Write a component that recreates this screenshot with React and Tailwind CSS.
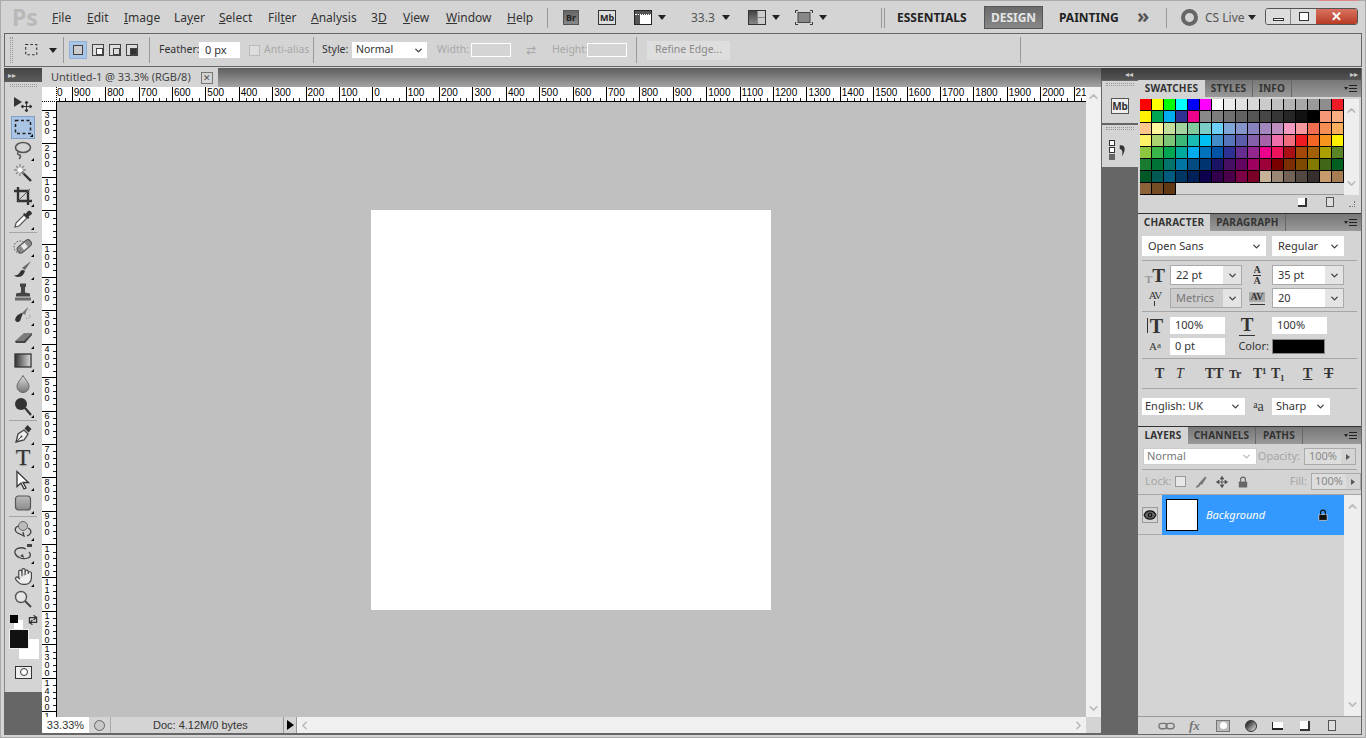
import React from "react";
import { ChevronDown, ChevronUp, ChevronLeft, ChevronRight, Hand, Eye } from "lucide-react";

const menus = [
  ["", "F", "ile", "w-[35px]"], ["", "E", "dit", "w-[37px]"], ["", "I", "mage", "w-[50px]"], ["La", "y", "er", "w-[45px]"],
  ["", "S", "elect", "w-[49px]"], ["Fil", "t", "er", "w-[43px]"], ["", "A", "nalysis", "w-[60px]"], ["3", "D", "", "w-[32px]"],
  ["", "V", "iew", "w-[43px]"], ["", "W", "indow", "w-[61px]"], ["", "H", "elp", "w-[40px]"],
];

const swatches = [
  ["#ff0000","#ffff00","#00ff00","#00ffff","#0000ff","#ff00ff","#ffffff","#ebebeb","#e1e1e1","#d7d7d7","#cbcbcb","#c0c0c0","#b4b4b4","#a8a8a8","#9a9a9a","#8d8d8d","#ed1c24"],
  ["#fff200","#00a651","#00aeef","#2e3192","#ec008c","#898989","#7d7d7d","#707070","#626262","#555555","#464646","#363636","#262626","#111111","#000000","#f7977a","#f9ad81"],
  ["#fdc68a","#fff79a","#c4df9b","#a2d39c","#82ca9d","#7bcdc8","#6ecff6","#7ea7d8","#8493ca","#8882be","#a187be","#bc8dbf","#f49ac2","#f6989d","#f26c4f","#f68e55","#fbaf5c"],
  ["#fff467","#acd372","#7cc576","#3bb878","#1abbb4","#00bff3","#438cca","#5574b9","#5c5caa","#855fa8","#a763a8","#ee6fa9","#f16d7e","#ed1c24","#f26522","#f7941d","#fff200"],
  ["#8dc63f","#39b54a","#00a651","#00a99d","#00aeef","#0072bc","#0054a6","#2e3192","#662d91","#92278f","#ec008c","#ed145b","#aa1116","#a4490a","#a36209","#aba000","#598527"],
  ["#197b30","#007236","#00746b","#0076a3","#004b80","#003471","#1b1464","#440e62","#630460","#9e005d","#9e0039","#790000","#7b2e00","#7d4900","#827b00","#406618","#005e20"],
  ["#005826","#005952","#005b7f","#003663","#002157","#0d004c","#32004b","#4b0049","#7b0046","#7a0026","#c7b299","#998675","#736357","#534741","#362f2d","#c69c6d","#a67c52"],
  ["#8c6239","#754c24","#603813"],
].flat();

const hLabels = [1000,900,800,700,600,500,400,300,200,100,0,100,200,300,400,500,600,700,800,900,1000,1100,1200,1300,1400,1500,1600,1700,1800,1900,2000,2100];
// last one is cut by the status bar, only its first digit shows
const vLabels = [300,200,100,0,100,200,300,400,500,600,700,800,900,1000,1100,1200,1300,1400,1];

const Svg = ({ size = 20, children }) => (
  <svg width={size} height={size} viewBox="0 0 20 20" fill="none">{children}</svg>
);

const icons = {
  move: <Svg><path d="M1 3l8 5-8 5z" fill="#333"/><path d="M13.500 8v9M9 12.500h9M13.500 7l-1.500 2h3zM13.500 18l-1.500-2h3zM8 12.500l2-1.500v3zM19 12.500l-2-1.500v3z" stroke="#333" fill="#333" strokeWidth="1"/></Svg>,
  marquee: <Svg><rect x="2.500" y="3.500" width="15" height="13" stroke="#222" strokeWidth="1.500" strokeDasharray="3 2.500"/></Svg>,
  lasso: <Svg><ellipse cx="10" cy="7.500" rx="7.500" ry="5" stroke="#555" strokeWidth="1.600"/><path d="M5 12c-1 2 0 3 2 3 1 1 0 3-1 4" stroke="#555" strokeWidth="1.400"/></Svg>,
  wand: <Svg><path d="M9 9l9 9" stroke="#333" strokeWidth="2.400"/><path d="M7 1v3M7 10v3M1 7h3M10 7h3M3 3l2 2M9 9l2 2M11 3L9 5M3 11l2-2" stroke="#8a8a8a" strokeWidth="1.300"/><circle cx="7" cy="7" r="2" fill="#fff"/></Svg>,
  crop: <Svg><path d="M5 1v14h14M1 5h14v14" stroke="#333" strokeWidth="2.400"/><path d="M5 15L17 3" stroke="#555" strokeWidth="1"/></Svg>,
  dropper: <Svg><path d="M2 18l1-4 8-8 3 3-8 8z" fill="#fff" stroke="#555" strokeWidth="1.200"/><path d="M10 5l5 5 1.500-1.500-1-1L19 5c0-2-2-4-4-3l-2.500 3-1-1z" fill="#333"/></Svg>,
  heal: <Svg><circle cx="7" cy="11" r="6" stroke="#444" strokeWidth="1" strokeDasharray="1.500 1.500"/><rect x="3" y="7" width="16" height="7" rx="3" transform="rotate(-40 11 10)" fill="#8a8a8a" stroke="#555"/><rect x="8.500" y="8" width="5" height="5" transform="rotate(-40 11 10)" fill="#e8e8e8"/></Svg>,
  brush: <Svg><path d="M9 9l9-7-6 9z" fill="#666"/><path d="M1 16c3 1 5-1 6-3 1-2 3-3 5-1-1 3-3 6-7 6-2 0-3-1-4-2z" fill="#333"/></Svg>,
  stamp: <Svg><path d="M7 1.500h6v3l-1 1v5l5 1v3H3v-3l5-1v-5l-1-1z" fill="#444"/><rect x="2" y="15.500" width="16" height="3" fill="#6b6b6b"/></Svg>,
  history: <Svg><path d="M2 15c1-5 5-7 8-7l-3 8c-2 2-4 1-5-1z" fill="#333"/><path d="M9 8l6-6-3 8z" fill="#777"/><path d="M13 13a2.500 2.500 0 1 0 3-4M14 3l3 3" stroke="#888" strokeDasharray="1.200 1.200"/></Svg>,
  eraser: <Svg><path d="M2 13L11 5h8l-7 10H3z" fill="#7c7c7c"/><path d="M2 13h9l8-8v2l-7 8H3z" fill="#444"/></Svg>,
  gradient: <Svg><defs><linearGradient id="gr" x1="0" x2="1"><stop offset="0" stopColor="#333"/><stop offset="1" stopColor="#ddd"/></linearGradient></defs><rect x="2" y="3" width="16" height="13" fill="url(#gr)" stroke="#333" strokeWidth="1.300"/></Svg>,
  drop: <Svg><defs><linearGradient id="dr" x1="0" y1="0" x2="0" y2="1"><stop offset="0" stopColor="#ddd"/><stop offset="1" stopColor="#777"/></linearGradient></defs><path d="M10 1.500c3 5 6 7.500 6 11a6 6 0 0 1-12 0c0-3.500 3-6 6-11z" fill="url(#dr)" stroke="#666"/></Svg>,
  burn: <Svg><circle cx="8" cy="7" r="6" fill="#333"/><path d="M12 11l6 7" stroke="#333" strokeWidth="2.200"/></Svg>,
  pen: <Svg><path d="M3 18l2-8 6-4 4 4-4 6z" fill="#eee" stroke="#444" strokeWidth="1.300"/><path d="M3 18l5-5" stroke="#444"/><circle cx="8.500" cy="12.500" r="1" fill="#444"/><path d="M11.500 4.500l3-3.500 4 4-3 3.500z" fill="#333"/></Svg>,
  select: <Svg><path d="M4 1.500v15l4-3.500 3 6 2-1-3-5.500h5.500z" fill="#fff" stroke="#333" strokeWidth="1.300"/></Svg>,
  shape: <Svg><defs><linearGradient id="sh" x1="0" y1="0" x2="0" y2="1"><stop offset="0" stopColor="#bbb"/><stop offset="1" stopColor="#8a8a8a"/></linearGradient></defs><rect x="2.500" y="3" width="15" height="14" rx="3" fill="url(#sh)" stroke="#555" strokeWidth="1.200"/></Svg>,
  rotate: <Svg><circle cx="10" cy="6" r="4.500" fill="#bbb" stroke="#666"/><path d="M5 6C1 8 1 12 7 14M15 8c4 2 4 6-1 8M7 14l4 2-1-4" stroke="#444" strokeWidth="1.300"/></Svg>,
  orbit: <Svg><path d="M13 6C7 3 1 6 2 10s7 7 13 5c3-1 3-4 1-6" stroke="#444" strokeWidth="1.300"/><path d="M7 13l4 2-1-4" fill="#444"/><rect x="14" y="1" width="5" height="3" fill="#444"/></Svg>,
  zoom: <Svg><circle cx="8" cy="8" r="5.500" fill="#e6e6e6" stroke="#555" strokeWidth="1.400"/><path d="M12 12l6 6" stroke="#444" strokeWidth="2"/></Svg>,
};

const toolGroups = [
  [["move", 0], ["marquee", 1, true], ["lasso", 1], ["wand", 0], ["crop", 1], ["dropper", 1]],
  [["heal", 1], ["brush", 1], ["stamp", 1], ["history", 1], ["eraser", 1], ["gradient", 1], ["drop", 1], ["burn", 1]],
  [["pen", 1], ["T", 1], ["select", 1], ["shape", 1]],
  [["rotate", 1], ["orbit", 1], ["hand", 1], ["zoom", 0]],
];

const Tool = ({ name, flyout, active }) => (
  <div className={`relative h-[23px] w-[24px] flex items-center justify-center ${active ? "bg-[#a9c4e4] border border-[#7f9fc6]" : ""}`}>
    {name === "T" ? (
      <span className="font-['Liberation_Serif',serif] text-[24px] leading-none text-[#333] [text-shadow:0_1px_1px_#999]">T</span>
    ) : name === "hand" ? (
      <Hand size={19} strokeWidth={1.5} color="#444" fill="#eee" />
    ) : (
      icons[name]
    )}
    {flyout ? <span className="absolute right-[1px] bottom-[1px] w-0 h-0 border-l-[3px] border-l-transparent border-b-[3px] border-b-black" /> : null}
  </div>
);

const Toolbox = () => (
  <div className="w-[38px] shrink-0 bg-[#666] flex flex-col">
    <div className="h-[14px] bg-gradient-to-b from-[#444] to-[#5c5c5c] text-[#ccc] text-[8px] leading-[13px] pl-[4px]">▸▸</div>
    <div className="h-[610px] bg-[#d4d4d4] border-l border-[#888] flex flex-col items-center pt-[2px] pr-[1px]">
      <div className="w-[27px] h-[3px] border-y border-dotted border-[#999]" />
      <div className="mt-[6px] flex flex-col items-center">
        {toolGroups.map((group, i) => (
          <div key={i} className={`flex flex-col items-center ${i ? "border-t border-[#a5a5a5] mt-[1px] pt-[2px] w-[28px]" : ""}`}>
            {group.map(([name, fly, active]) => <Tool key={name} name={name} flyout={fly} active={active} />)}
          </div>
        ))}
      </div>
      <div className="relative w-full h-[78px] mt-[4px]">
        <div className="absolute left-[9px] top-[5px] w-[9px] h-[9px] bg-white" />
        <div className="absolute left-[5px] top-[0px] w-[8px] h-[8px] bg-black" />
        <div className="absolute left-[22px] top-[-1px]">
          <Svg size={12}><path d="M4 16V6h10M11 2l4 4-4 4M16 4v10H6M9 18l-4-4 4-4" stroke="#333" strokeWidth="2" /></Svg>
        </div>
        <div className="absolute left-[14px] top-[24px] w-[20px] h-[20px] bg-white" />
        <div className="absolute left-[4px] top-[14px] w-[20px] h-[20px] bg-[#111] border border-[#eee]" />
        <div className="absolute left-[10px] top-[51px] w-[17px] h-[13px] bg-[#eee] border border-[#333] flex items-center justify-center">
          <div className="w-[8px] h-[8px] rounded-full border border-[#333] bg-white" />
        </div>
      </div>
    </div>
  </div>
);

const HRuler = () => (
  <div className="flex-1 h-[15px] bg-white border-b border-black flex overflow-hidden">
    {hLabels.map((label, i) => (
      <div key={i} className={`w-[33.4px] shrink-0 border-l border-black flex flex-col ${i === 0 ? "ml-[-18.6px]" : ""}`}>
        <span className="text-[10px] leading-[11px] pl-[1px] text-black font-['Liberation_Sans',sans-serif]">{label}</span>
        <div className="flex mt-auto h-[3px]">
          {[0, 1, 2, 3, 4].map((t) => <div key={t} className={`w-[6.6px] ${t ? "border-l border-[#222]" : ""}`} />)}
        </div>
      </div>
    ))}
  </div>
);

const VRuler = () => (
  <div className="w-[15px] h-[615px] bg-white border-r border-black flex flex-col overflow-hidden shrink-0">
    <div className="h-[8px] shrink-0" />
    {vLabels.map((label, i) => (
      <div key={i} className="h-[33.4px] shrink-0 border-t border-black flex">
        <div className="w-[10px] flex flex-col items-center text-[9px] leading-[8px] text-black font-['Liberation_Sans',sans-serif]">
          {String(label).split("").map((d, k) => <span key={k}>{d}</span>)}
        </div>
        <div className="flex-1 flex flex-col items-end">
          {[0, 1, 2, 3, 4].map((t) => <div key={t} className={`h-[6.6px] w-[3px] ${t ? "border-t border-[#222]" : ""}`} />)}
        </div>
      </div>
    ))}
  </div>
);

const DocArea = () => (
  <div className="flex-1 flex flex-col min-w-0">
    <div className="h-[19px] bg-gradient-to-b from-[#5e5e5e] to-[#a3a3a3] flex shrink-0">
      <div className="w-[176px] bg-[#d4d4d4] flex items-center pl-[9px] text-[11px] text-[#444] whitespace-nowrap">
        <span>Untitled-1 @ 33.3% (RGB/8)</span>
        <span className="ml-auto mr-[5px] w-[12px] h-[12px] border border-[#777] flex items-center justify-center text-[9px] leading-none text-[#555]">✕</span>
      </div>
    </div>
    <div className="flex flex-1 min-h-0">
      <div className="flex-1 flex flex-col min-w-0">
        <div className="flex h-[15px] shrink-0">
          <div className="w-[15px] h-[15px] bg-white border-b border-r border-dotted border-black shrink-0" />
          <HRuler />
        </div>
        <div className="flex flex-1 min-h-0">
          <VRuler />
          <div className="flex-1 bg-[#c0c0c0] flex items-center justify-center pr-[1px]">
            <div className="w-[400px] h-[400px] bg-white" />
          </div>
        </div>
      </div>
      <div className="w-[15px] bg-[#f0f0f0] flex flex-col items-center justify-between pt-[3px] pb-[2px] shrink-0">
        <ChevronUp size={13} color="#bbb" strokeWidth={3} />
        <ChevronDown size={13} color="#bbb" strokeWidth={3} />
      </div>
    </div>
    <div className="h-[17px] flex items-stretch bg-[#d4d4d4] border-b border-[#666] text-[11px] text-[#333] shrink-0 font-['Liberation_Sans',sans-serif]">
      <div className="w-[47px] bg-white flex items-center justify-center">33.33%</div>
      <div className="w-[22px] flex items-center justify-center border-r border-[#aaa]">
        <div className="w-[11px] h-[11px] rounded-full border border-[#666] bg-[#c8c8c8]" />
      </div>
      <div className="w-[172px] flex items-center pl-[42px] whitespace-nowrap">Doc: 4.12M/0 bytes</div>
      <div className="w-[14px] border-l border-r border-[#999] flex items-center justify-center">
        <span className="w-0 h-0 border-y-[5px] border-y-transparent border-l-[7px] border-l-black" />
      </div>
      <div className="flex-1 bg-[#f0f0f0] flex items-center justify-between px-[1px]">
        <ChevronLeft size={13} color="#bbb" strokeWidth={3} />
        <ChevronRight size={13} color="#bbb" strokeWidth={3} />
      </div>
      <div className="w-[15px]" />
    </div>
  </div>
);

const PanelMenu = () => (
  <div className="ml-auto mr-[4px] flex items-center gap-[1px]">
    <span className="w-0 h-0 border-x-[2px] border-x-transparent border-t-[3px] border-t-[#222]" />
    <div className="w-[8px] h-[7px] border-y border-[#222] flex items-center"><div className="w-full h-[1px] bg-[#222]" /></div>
  </div>
);

const Tabs = ({ tabs }) => (
  <div className="h-[17px] bg-gradient-to-b from-[#777] to-[#999] flex shrink-0">
    {tabs.map(([label, w], i) => (
      <div
        key={label}
        className={`${w} flex items-center justify-center text-[10px] font-bold tracking-[0.2px] ${i === 0 ? "bg-[#d4d4d4] text-[#333]" : "text-[#333] border-r border-[#666]"}`}
      >
        {label}
      </div>
    ))}
    <PanelMenu />
  </div>
);

const Chevron = () => <ChevronDown size={11} strokeWidth={3} color="#444" />;

const Select = ({ children, className }) => (
  <div className={`bg-white h-[20px] flex items-center justify-between pl-[6px] pr-[4px] text-[11px] text-[#333] ${className}`}>
    <span>{children}</span>
    <Chevron />
  </div>
);

const Combo = ({ children, muted }) => (
  <div className="w-[72px] h-[20px] flex border border-[#aaa] text-[11px] text-[#333]">
    <div className={`flex-1 flex items-center pl-[5px] ${muted ? "bg-[#ccc] text-[#777]" : "bg-white"}`}>{children}</div>
    <div className="w-[18px] bg-[#e4e4e4] flex items-center justify-center"><Chevron /></div>
  </div>
);

const Field = ({ children }) => (
  <div className="w-[55px] h-[17px] bg-white flex items-center pl-[5px] text-[11px] text-[#333]">{children}</div>
);

const Rule = ({ className }) => <div className={`h-px bg-[#a5a5a5] mx-[4px] ${className}`} />;

const Glyph = ({ children, className }) => (
  <span className={`font-['Liberation_Serif',serif] font-bold leading-none text-[#333] ${className}`}>{children}</span>
);

const CharIcon = ({ children }) => <div className="flex items-center justify-center pl-[2px]">{children}</div>;

const SwatchesPanel = () => (
  <div className="h-[133px] bg-[#d4d4d4] flex flex-col shrink-0">
    <Tabs tabs={[["SWATCHES", "w-[67px]"], ["STYLES", "w-[48px]"], ["INFO", "w-[39px]"]]} />
    <div className="flex pl-[2px] pt-[2px]">
      <div className="w-[204px] h-[96px] grid grid-cols-[repeat(17,12px)] auto-rows-[12px] border-b border-[#999]">
        {swatches.map((c, i) => (
          <div key={i} className="border-r border-b border-black" style={{ backgroundColor: c }} />
        ))}
      </div>
      <div className="w-[15px] h-[96px] bg-[#eee] flex flex-col items-center justify-between py-[5px]">
        <ChevronUp size={13} color="#bbb" strokeWidth={3} />
        <ChevronDown size={13} color="#bbb" strokeWidth={3} />
      </div>
    </div>
    <div className="flex items-center pl-[160px] pt-[2px]">
      <div className="w-[9px] h-[9px] bg-white border-r-2 border-b-2 border-[#333]" />
      <div className="ml-[19px] w-[8px] h-[10px] border border-[#555] bg-[#ddd]" />
      <div className="ml-[15px] w-[6px] h-[6px] border-r border-b border-dotted border-[#777] self-end" />
    </div>
  </div>
);

const CharacterPanel = () => (
  <div className="h-[214px] bg-[#d4d4d4] border-y border-[#333] flex flex-col shrink-0">
    <Tabs tabs={[["CHARACTER", "w-[72px]"], ["PARAGRAPH", "w-[76px]"]]} />
    <div className="flex gap-[6px] pl-[4px] pt-[5px]">
      <Select className="w-[124px]">Open Sans</Select>
      <Select className="w-[72px]">Regular</Select>
    </div>
    <Rule className="mt-[4px]" />
    <div className="grid grid-cols-[32px_72px_30px_72px] auto-rows-[20px] gap-y-[3px] pt-[4px] items-center">
      <CharIcon>
        <Glyph className="text-[11px] self-end text-[#999]">T</Glyph>
        <Glyph className="text-[19px]">T</Glyph>
      </CharIcon>
      <Combo>22 pt</Combo>
      <div className="flex flex-col items-center">
        <Glyph className="text-[10px] leading-[9px]">A</Glyph>
        <Glyph className="text-[10px] leading-[9px] border-t border-[#333]">A</Glyph>
      </div>
      <Combo>35 pt</Combo>
      <CharIcon>
        <div className="flex flex-col items-center">
          <Glyph className="text-[11px] tracking-[-1px] font-normal">AV</Glyph>
          <span className="w-[1px] h-[5px] bg-[#333]" />
        </div>
      </CharIcon>
      <Combo muted>Metrics</Combo>
      <div className="flex flex-col items-center">
        <Glyph className="text-[10px] bg-[#aaa] px-[1px]">AV</Glyph>
        <span className="w-[15px] h-[1px] bg-[#333] mt-[2px]" />
      </div>
      <Combo>20</Combo>
    </div>
    <Rule className="mt-[3px]" />
    <div className="grid grid-cols-[32px_55px_47px_55px] auto-rows-[17px] gap-y-[4px] pt-[5px] items-center">
      <CharIcon>
        <span className="w-[1px] h-[15px] bg-[#333] mr-[2px]" />
        <Glyph className="text-[20px]">T</Glyph>
      </CharIcon>
      <Field>100%</Field>
      <div className="flex flex-col items-center pr-[3px]">
        <Glyph className="text-[19px] leading-[13px]">T</Glyph>
        <span className="w-[16px] h-[1px] bg-[#333] mt-[1px]" />
      </div>
      <Field>100%</Field>
      <CharIcon>
        <Glyph className="text-[11px] font-normal">A</Glyph>
        <Glyph className="text-[9px] font-normal self-start">a</Glyph>
      </CharIcon>
      <Field>0 pt</Field>
      <span className="text-[11px] text-[#333] text-right pr-[3px]">Color:</span>
      <div className="w-[53px] h-[15px] bg-black border border-[#888]" />
    </div>
    <Rule className="mt-[3px]" />
    <div className="h-[29px] flex items-center pl-[17px]">
      <Glyph className="text-[14px] w-[21px]">T</Glyph>
      <Glyph className="text-[14px] w-[29px] italic font-normal">T</Glyph>
      <Glyph className="text-[14px] w-[24px]">TT</Glyph>
      <Glyph className="text-[12px] w-[24px]">Tr</Glyph>
      <Glyph className="text-[14px] w-[18px]">T¹</Glyph>
      <Glyph className="text-[14px] w-[32px]">T₁</Glyph>
      <Glyph className="text-[14px] w-[21px] underline">T</Glyph>
      <Glyph className="text-[14px] line-through">T</Glyph>
    </div>
    <Rule />
    <div className="flex items-center pl-[4px] pt-[9px]">
      <Select className="w-[103px] !h-[17px] !pl-[3px]">English: UK</Select>
      <div className="w-[27px] flex justify-center font-['Liberation_Serif',serif] leading-none text-[#333]">
        <span className="text-[10px]">a</span><span className="text-[14px]">a</span>
      </div>
      <Select className="w-[58px] !h-[17px] !pl-[4px]">Sharp</Select>
    </div>
  </div>
);

const Readout = ({ children }) => (
  <div className="w-[52px] h-[17px] flex border border-[#aaa] text-[11px] text-[#8a8a8a]">
    <div className="flex-1 bg-[#ddd] flex items-center justify-center">{children}</div>
    <div className="w-[14px] flex items-center justify-center">
      <span className="w-0 h-0 border-y-[3px] border-y-transparent border-l-[4px] border-l-[#555]" />
    </div>
  </div>
);

const LayersPanel = () => (
  <div className="flex-1 bg-[#d4d4d4] flex flex-col min-h-0">
    <Tabs tabs={[["LAYERS", "w-[50px]"], ["CHANNELS", "w-[68px]"], ["PATHS", "w-[47px]"]]} />
    <div className="flex items-center pl-[5px] pt-[4px]">
      <div className="w-[114px] h-[17px] bg-white border border-[#ccc] flex items-center justify-between pl-[3px] pr-[4px] text-[11px] text-[#777]">
        <span>Normal</span>
        <ChevronDown size={11} strokeWidth={3} color="#bbb" />
      </div>
      <span className="w-[47px] text-right pr-[4px] text-[11px] text-[#a5a5a5]">Opacity:</span>
      <Readout>100%</Readout>
    </div>
    <Rule className="mt-[4px]" />
    <div className="flex items-center pl-[7px] pt-[3px] text-[11px] text-[#a5a5a5]">
      <span className="w-[31px]">Lock:</span>
      <div className="flex items-center gap-[9px] w-[116px]">
        <div className="w-[11px] h-[11px] border border-[#999] bg-[#e8e8e8]" />
        <Svg size={12}><path d="M2 18c4 0 5-2 6-5L18 2 10 14" stroke="#777" strokeWidth="3" /></Svg>
        <Svg size={12}><path d="M10 1v18M1 10h18M10 1L7 5h6zM10 19l-3-4h6zM1 10l4-3v6zM19 10l-4-3v6z" stroke="#555" fill="#555" strokeWidth="1.500" /></Svg>
        <Svg size={12}><rect x="3" y="9" width="14" height="10" rx="1" fill="#666" /><path d="M6 9V6a4 4 0 0 1 8 0v3" stroke="#666" strokeWidth="2" /></Svg>
      </div>
      <span className="w-[25px] text-right pr-[4px]">Fill:</span>
      <Readout>100%</Readout>
    </div>
    <Rule className="mt-[4px] !mx-0" />
    <div className="flex flex-1 min-h-0">
      <div className="w-[206px] flex flex-col">
        <div className="h-[40px] flex">
          <div className="w-[24px] flex items-center justify-center border-b border-[#aaa]">
            <div className="w-[16px] h-[16px] border border-[#999] flex items-center justify-center">
              <Eye size={14} color="#111" fill="#666" strokeWidth={2} />
            </div>
          </div>
          <div className="flex-1 bg-[#3399ff] flex items-center pl-[4px] pr-[15px]">
            <div className="w-[32px] h-[32px] bg-white border border-black" />
            <span className="ml-[8px] italic text-[11px] text-white">Background</span>
            <div className="ml-auto">
              <Svg size={12}><rect x="3" y="9" width="14" height="10" rx="1" fill="#111" stroke="#fff" /><path d="M6 9V6a4 4 0 0 1 8 0v3" stroke="#111" strokeWidth="2" /></Svg>
            </div>
          </div>
        </div>
      </div>
      <div className="flex-1 bg-[#eee] flex flex-col items-center justify-between py-[5px]">
        <ChevronUp size={13} color="#bbb" strokeWidth={3} />
        <ChevronDown size={13} color="#bbb" strokeWidth={3} />
      </div>
    </div>
    <div className="h-[18px] border-t border-[#999] flex items-center pl-[20px] shrink-0">
      <div className="w-[27px]"><Svg size={18}><rect x="1" y="7" width="9" height="6" rx="3" stroke="#777" strokeWidth="1.500" /><rect x="9" y="7" width="9" height="6" rx="3" stroke="#777" strokeWidth="1.500" /></Svg></div>
      <span className="w-[27px] pl-[4px] font-['Liberation_Serif',serif] italic font-bold text-[13px] text-[#777]">fx</span>
      <div className="w-[27px] pl-[4px]"><div className="w-[14px] h-[12px] bg-[#bbb] border border-[#777] flex items-center justify-center"><div className="w-[7px] h-[7px] rounded-full bg-white" /></div></div>
      <div className="w-[27px] pl-[6px]"><div className="w-[12px] h-[12px] rounded-full bg-gradient-to-br from-[#111] to-[#eee] border border-[#333]" /></div>
      <div className="w-[27px] pl-[6px]"><div className="w-[11px] h-[8px] bg-white border-b-2 border-l border-[#222]" /></div>
      <div className="w-[27px] pl-[7px]"><div className="w-[10px] h-[10px] bg-white border-r-2 border-b-2 border-[#333]" /></div>
      <div className="ml-[8px] w-[8px] h-[11px] bg-[#ddd] border border-[#555]" />
    </div>
  </div>
);

const DockTab = ({ children, gap }) => (
  <div className="h-[42px] bg-[#d4d4d4] mb-[2px] flex flex-col items-center pt-[2px]">
    <div className="w-[28px] h-[3px] border-y border-dotted border-[#999]" />
    <div className={gap}>{children}</div>
  </div>
);

const Dock = () => (
  <div className="w-[261px] shrink-0 flex flex-col bg-[#333] border-r border-[#666]">
    <div className="h-[12px] bg-gradient-to-b from-[#3a3a3a] to-[#555] flex items-center text-[8px] text-[#ccc] shrink-0">
      <span className="ml-[24px]">◂◂</span>
      <span className="ml-auto mr-[3px]">▸▸</span>
    </div>
    <div className="flex flex-1 min-h-0">
      <div className="w-[37px] bg-[#666] pl-[1px] pt-[1px] shrink-0">
        <DockTab gap="mt-[12px]">
          <div className="w-[18px] h-[16px] bg-[#eee] border border-[#555] text-[10px] leading-[15px] text-center font-bold text-[#333]">Mb</div>
        </DockTab>
        <DockTab gap="mt-[10px]">
          <div className="flex items-center gap-[1px]">
            <div className="flex flex-col gap-[1px]">
              <div className="w-[6px] h-[6px] border border-[#333] bg-white" />
              <div className="w-[6px] h-[6px] border border-[#333] bg-white" />
              <div className="w-[6px] h-[6px] bg-[#666]" />
            </div>
            <Svg size={15}><path d="M5 3c7-1 9 5 3 15 1-6 1-9-3-10z" fill="#333" /></Svg>
          </div>
        </DockTab>
      </div>
      <div className="flex-1 flex flex-col min-w-0">
        <SwatchesPanel />
        <CharacterPanel />
        <LayersPanel />
      </div>
    </div>
  </div>
);

const Arrow = () => <span className="block w-0 h-0 border-x-[4px] border-x-transparent border-t-[5px] border-t-[#222]" />;
const VSep = ({ className }) => <div className={`w-px bg-[#9a9a9a] ${className}`} />;

const TopBar = () => (
  <div className="h-[33px] shrink-0 flex items-center pl-[8px] pt-[2px] text-[#333] whitespace-nowrap">
    <span className="w-[40px] font-bold text-[23px] leading-none text-[#b9b9b9]">Ps</span>
    <div className="flex text-[12px]">
      {menus.map(([a, u, b, w]) => (
        <div key={a + u} className={w}>
          {a}<span className="underline">{u}</span>{b}
        </div>
      ))}
    </div>
    <VSep className="h-[20px]" />
    <div className="ml-[15px] w-[16px] h-[15px] bg-gradient-to-b from-[#666] to-[#888] border border-[#555] text-[9px] leading-[14px] text-center font-bold text-[#222]">Br</div>
    <div className="ml-[19px] w-[18px] h-[15px] border border-[#333] bg-[#ddd] text-[9px] leading-[14px] text-center font-bold text-[#222]">Mb</div>
    <div className="ml-[18px] w-[18px] h-[15px] border border-[#222] bg-white flex flex-col">
      <div className="h-[4px] bg-[#555] border-b border-dotted border-white" />
      <div className="flex-1 w-[5px] bg-[#555]" />
    </div>
    <div className="ml-[6px]"><Arrow /></div>
    <span className="ml-[25px] w-[31px] text-[12px] text-[#555]">33.3</span>
    <Arrow />
    <div className="ml-[18px] w-[18px] h-[15px] border border-[#333] bg-[#888] grid grid-cols-2 gap-px">
      <div className="row-span-2 bg-gradient-to-b from-[#444] to-[#888]" />
      <div className="bg-[#ccc]" />
      <div className="bg-[#ccc]" />
    </div>
    <div className="ml-[6px]"><Arrow /></div>
    <div className="ml-[15px] w-[18px] h-[15px]">
      <svg width="18" height="15" viewBox="0 0 18 15" fill="none">
        <path d="M0.500 3V0.500H3M15 0.500h2.500V3M17.500 12v2.500H15M3 14.500H0.500V12" stroke="#333" />
        <rect x="3" y="2.500" width="12" height="10" fill="#888" stroke="#444" />
      </svg>
    </div>
    <div className="ml-[6px]"><Arrow /></div>
    <div className="ml-[54px] w-[4px] h-[20px] border-x border-[#999]" />
    <span className="ml-[12px] w-[87px] font-bold text-[12px] text-[#222]">ESSENTIALS</span>
    <div className="w-[59px] h-[23px] bg-gradient-to-b from-[#6a6a6a] to-[#888] border border-[#555] flex items-center justify-center font-bold text-[12px] text-[#e6e6e6]">DESIGN</div>
    <span className="ml-[16px] w-[78px] font-bold text-[12px] text-[#222]">PAINTING</span>
    <span className="w-[29px] font-bold text-[20px] leading-none text-[#555] mb-[3px]">»</span>
    <VSep className="h-[20px]" />
    <div className="ml-[14px] w-[17px] h-[17px] rounded-full border-[4px] border-[#666]" />
    <span className="ml-[7px] w-[40px] text-[12px] text-[#555]">CS Live</span>
    <div className="ml-[3px]"><Arrow /></div>
    <div className="ml-[9px] w-[93px] h-[17px] mb-[2px] flex border border-[#555] rounded-[3px] overflow-hidden">
      <div className="w-[25px] bg-[#dcdcdc] border-r border-[#888] flex items-end justify-center pb-[3px]">
        <div className="w-[11px] h-[3px] bg-white border border-[#333]" />
      </div>
      <div className="w-[25px] bg-[#dcdcdc] flex items-center justify-center">
        <div className="w-[10px] h-[9px] bg-white border border-[#333]" />
      </div>
      <div className="flex-1 bg-gradient-to-b from-[#d8735f] to-[#b83a24] flex items-center justify-center font-bold text-[13px] leading-none text-white">✕</div>
    </div>
  </div>
);

const OptField = ({ className, children }) => (
  <div className={`h-[16px] flex items-center pl-[6px] text-[11px] text-[#333] ${className}`}>{children}</div>
);

const OptionsBar = () => (
  <div className="h-[34px] shrink-0 border border-[#666] flex items-center text-[10.5px] text-[#333] whitespace-nowrap">
    <div className="ml-[5px] w-[3px] h-[26px] border-x border-dotted border-[#999]" />
    <div className="ml-[11px]">
      <Svg size={17}><rect x="2" y="3" width="13" height="12" stroke="#333" strokeWidth="1.300" strokeDasharray="3 2.500" /></Svg>
    </div>
    <div className="ml-[8px]"><Arrow /></div>
    <VSep className="ml-[6px] h-[26px]" />
    <div className="ml-[5px] w-[18px] h-[18px] bg-[#a9c4e4] border border-[#8fb0d8] flex items-center justify-center">
      <div className="w-[10px] h-[10px] bg-[#ccc] border border-[#444]" />
    </div>
    {["bg-white", "bg-transparent", "bg-[#333]"].map((c) => (
      <div key={c} className="ml-[5px] w-[12px] h-[12px] border border-[#444] flex items-end justify-end bg-[#ddd]">
        <div className={`w-[7px] h-[7px] border border-[#444] ${c}`} />
      </div>
    ))}
    <VSep className="ml-[11px] h-[26px]" />
    <span className="ml-[9px] w-[40px]">Feather:</span>
    <OptField className="w-[41px] bg-white">0 px</OptField>
    <div className="ml-[9px] w-[11px] h-[11px] border border-[#bbb] bg-[#ddd]" />
    <span className="ml-[4px] w-[49px] text-[#a8a8a8]">Anti-alias</span>
    <VSep className="h-[26px]" />
    <span className="ml-[8px] w-[30px]">Style:</span>
    <div className="w-[75px] h-[16px] bg-white flex items-center justify-between pl-[4px] pr-[3px]">
      Normal <Chevron />
    </div>
    <span className="ml-[10px] w-[34px] text-[#a8a8a8]">Width:</span>
    <div className="w-[40px] h-[14px] border border-white bg-[#d4d4d4]" />
    <span className="ml-[15px] w-[26px] text-[#a8a8a8] text-[12px]">⇄</span>
    <span className="w-[35px] text-[#a8a8a8]">Height:</span>
    <div className="w-[40px] h-[14px] border border-white bg-[#d4d4d4]" />
    <VSep className="ml-[9px] h-[26px]" />
    <div className="ml-[10px] w-[83px] h-[19px] bg-[#dedede] flex items-center justify-center text-[#8a8a8a]">Refine Edge...</div>
    <VSep className="ml-[290px] h-[26px]" />
  </div>
);

export default function App() {
  return (
    <div className="relative w-[1366px] h-[738px] bg-[#d4d4d4] overflow-hidden pl-[4px] pr-[4px] flex flex-col shadow-[inset_0_0_0_1px_#aaa] font-['Noto_Sans',sans-serif]">
      <div className="absolute top-0 left-[1318px] w-[40px] h-px bg-[#d88]" />
      <TopBar />
      <OptionsBar />
      <div className="h-px shrink-0" />
      <div className="h-[666px] flex shrink-0">
        <Toolbox />
        <DocArea />
        <Dock />
      </div>
      <div className="h-px bg-[#666] shrink-0" />
    </div>
  );
}
